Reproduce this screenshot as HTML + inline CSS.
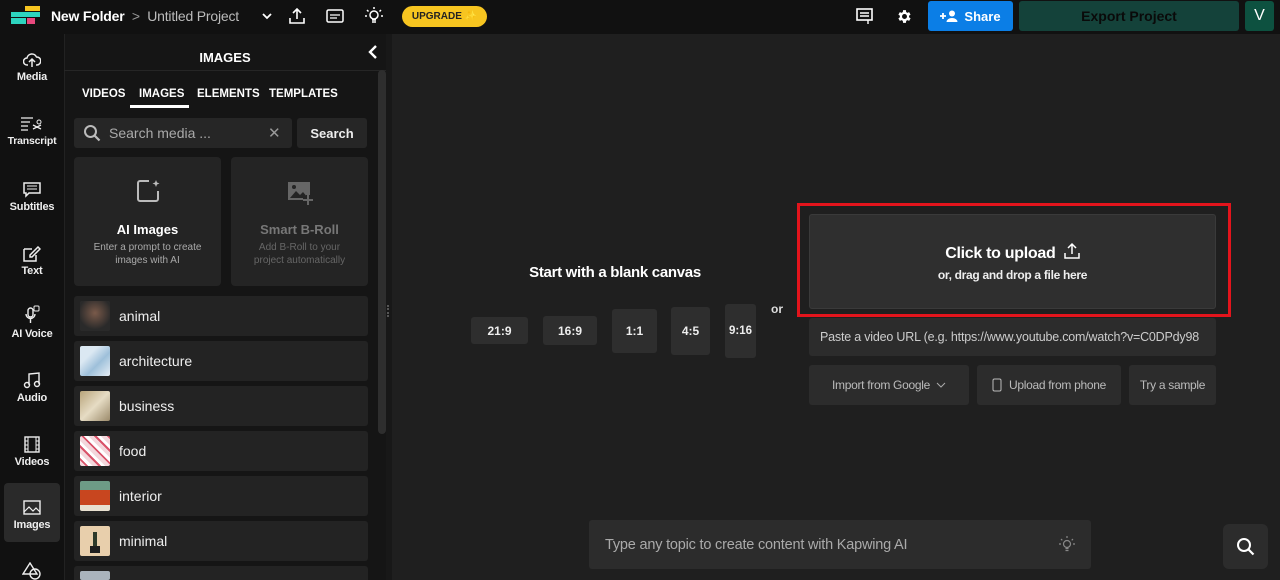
<!DOCTYPE html>
<html style="height:580px;overflow:hidden"><head><meta charset="utf-8"><style>
*{box-sizing:border-box;margin:0;padding:0}
html,body{width:1280px;height:580px;overflow:hidden}
body{background:#1f1f1f;font-family:"Liberation Sans",sans-serif;color:#fff;position:relative}
.abs{position:absolute}
.top{left:0;top:0;width:1280px;height:34px;background:#111}
.rail{left:0;top:34px;width:64px;height:546px;background:#111}
.panel{left:64px;top:34px;width:328px;height:546px;background:#151515;border-left:1px solid #222}
.ri{position:absolute;left:0;width:64px;text-align:center;font-size:11px;font-weight:bold;color:#eee;letter-spacing:-0.2px}
.ri svg{display:block;margin:0 auto 3px}
.card{position:absolute;left:74px;width:294px;height:40px;background:#232323;border-radius:3px}
.card .th{position:absolute;left:6px;top:5px;width:30px;height:30px;border-radius:2px}
.card span{position:absolute;left:45px;top:12px;font-size:14px;color:#eee}
.btn{position:absolute;background:#2e2e2e;border-radius:3px;color:#eee;font-size:12px;font-weight:bold;display:flex;align-items:center;justify-content:center}
.gb{position:absolute;background:#2c2c2c;border-radius:3px;color:#bbb;font-size:12px;display:flex;align-items:center;justify-content:center;letter-spacing:-0.3px}
</style></head><body>
<div class="abs top"></div>
<div class="abs" style="left:25px;top:6px;width:15px;height:5px;background:#f7c520"></div>
<div class="abs" style="left:11px;top:12px;width:29px;height:5px;background:#2dd4bf"></div>
<div class="abs" style="left:11px;top:18px;width:15px;height:6px;background:#2dd4bf"></div>
<div class="abs" style="left:27px;top:18px;width:8px;height:6px;background:#e8487d"></div>
<div class="abs" style="left:51px;top:8px;font-size:14px;font-weight:bold;letter-spacing:-0.2px">New Folder <span style="color:#999;font-weight:normal">&nbsp;&gt;&nbsp;</span> <span style="color:#bbb;font-weight:normal">Untitled Project</span></div>
<svg class="abs" style="left:261px;top:11px" width="12" height="10"><path d="M2 3l4 4 4-4" stroke="#fff" stroke-width="1.8" fill="none"/></svg>
<svg class="abs" style="left:288px;top:7px" width="18" height="18"><path d="M9 12V2M5 6l4-4 4 4M2 11v5h14v-5" stroke="#fff" stroke-width="1.6" fill="none"/></svg>
<svg class="abs" style="left:326px;top:9px" width="18" height="15"><rect x="1" y="1" width="16" height="12" rx="1.5" stroke="#fff" stroke-width="1.5" fill="none"/><path d="M4 6h10M4 9h7" stroke="#fff" stroke-width="1.3"/></svg>
<svg class="abs" style="left:364px;top:6px" width="20" height="20"><circle cx="10" cy="9" r="4" stroke="#fff" stroke-width="1.5" fill="none"/><path d="M8 14h4M8 16h4M10 1v2M3 4l1.5 1.5M17 4l-1.5 1.5M1 10h2M17 10h2" stroke="#fff" stroke-width="1.5"/></svg>
<div class="abs" style="left:402px;top:6px;width:85px;height:21px;background:#f7c520;border-radius:11px;color:#222;font-size:10px;font-weight:bold;text-align:center;line-height:21px">UPGRADE ✨</div>
<svg class="abs" style="left:856px;top:8px" width="17" height="17"><rect x="1" y="1" width="15" height="11" stroke="#fff" stroke-width="1.6" fill="none"/><path d="M4 5h9M4 8h9M12 12v4" stroke="#fff" stroke-width="1.4"/></svg>
<svg class="abs" style="left:896px;top:8px" width="17" height="17" viewBox="0 0 24 24"><path fill="#fff" d="M19.4 13a7.5 7.5 0 000-2l2.1-1.6-2-3.5-2.5 1a7 7 0 00-1.7-1L15 3h-4l-.4 2.9a7 7 0 00-1.7 1l-2.5-1-2 3.5L6.5 11a7.5 7.5 0 000 2l-2.1 1.6 2 3.5 2.5-1a7 7 0 001.7 1L11 21h4l.4-2.9a7 7 0 001.7-1l2.5 1 2-3.5zM13 15.5a3.5 3.5 0 110-7 3.5 3.5 0 010 7z" transform="translate(-1 0)"/></svg>
<div class="abs" style="left:928px;top:1px;width:85px;height:30px;background:#0b7ee6;border-radius:3px;font-size:13px;font-weight:bold;display:flex;align-items:center;justify-content:center"><svg width="18" height="12" style="margin-right:6px"><path d="M3 3v6M0 6h6" stroke="#fff" stroke-width="1.8"/><circle cx="12" cy="3.5" r="3" fill="#fff"/><path d="M6.5 12a5.5 4 0 0111 0z" fill="#fff"/></svg>Share</div>
<div class="abs" style="left:1019px;top:1px;width:220px;height:30px;background:#14423a;border-radius:3px;font-size:14px;font-weight:bold;line-height:30px;text-align:center;color:#0a0a0a">Export Project</div>
<div class="abs" style="left:1245px;top:1px;width:29px;height:30px;background:#0d5140;border-radius:3px;font-size:16px;line-height:30px;text-align:center">V</div>

<div class="abs rail"></div>
<div class="ri" style="top:52px"><svg width="18" height="16"><path d="M5 13H4a3.5 3.5 0 010-7 5 5 0 019.5-1A3.5 3.5 0 0114 13h-1M9 15V8M6 10l3-3 3 3" stroke="#eee" stroke-width="1.5" fill="none"/></svg>Media</div>
<div class="ri" style="top:116px;font-size:10.5px"><svg width="26" height="16"><path d="M2 2h12M2 6h9M2 10h7M2 14h7M14 9l8 4M14 13l8-4" stroke="#eee" stroke-width="1.3" fill="none"/><circle cx="20" cy="6" r="2" stroke="#eee" fill="none"/></svg>Transcript</div>
<div class="ri" style="top:182px"><svg width="18" height="16"><path d="M1 1h16v10H6l-3 3v-3H1z" stroke="#eee" stroke-width="1.5" fill="none"/><path d="M4 4h10M4 7h10" stroke="#eee"/></svg>Subtitles</div>
<div class="ri" style="top:246px"><svg width="18" height="16"><path d="M1 3h8M1 3v12h12V9M15 1l2 2-8 8H7V9z" stroke="#eee" stroke-width="1.5" fill="none"/></svg>Text</div>
<div class="ri" style="top:305px"><svg width="18" height="20"><rect x="5" y="3" width="5" height="9" rx="2.5" stroke="#eee" stroke-width="1.4" fill="none"/><path d="M3 9a4.5 4.5 0 009 0M7.5 14v4" stroke="#eee" stroke-width="1.4" fill="none"/><rect x="11" y="1" width="5" height="5" rx="1" stroke="#eee" fill="none"/></svg>AI Voice</div>
<div class="ri" style="top:372px"><svg width="18" height="17"><path d="M6 13V2l10-1v11" stroke="#eee" stroke-width="1.4" fill="none"/><circle cx="4" cy="13" r="2.5" stroke="#eee" stroke-width="1.4" fill="none"/><circle cx="14" cy="12" r="2.5" stroke="#eee" stroke-width="1.4" fill="none"/></svg>Audio</div>
<div class="ri" style="top:436px"><svg width="18" height="17"><rect x="2" y="1" width="14" height="15" stroke="#eee" stroke-width="1.4" fill="none"/><path d="M5 1v15M13 1v15M2 5h3M2 9h3M2 13h3M13 5h3M13 9h3M13 13h3" stroke="#eee"/></svg>Videos</div>
<div class="abs" style="left:4px;top:483px;width:56px;height:59px;background:#2a2a2a;border-radius:4px"></div>
<div class="ri" style="top:500px"><svg width="18" height="16"><rect x="1" y="1" width="16" height="13" stroke="#eee" stroke-width="1.4" fill="none"/><path d="M1 12l5-5 4 4 3-3 4 4" stroke="#eee" stroke-width="1.2" fill="none"/></svg>Images</div>
<div class="ri" style="top:562px"><svg width="20" height="18"><path d="M8 1L1 12h14z" stroke="#eee" stroke-width="1.4" fill="none"/><circle cx="13" cy="12" r="5" stroke="#eee" stroke-width="1.4" fill="none"/></svg></div>

<div class="abs panel"></div>
<div class="abs" style="left:64px;top:50px;width:322px;text-align:center;font-size:13px;font-weight:bold">IMAGES</div>
<svg class="abs" style="left:367px;top:44px" width="12" height="16"><path d="M9 2L3 8l6 6" stroke="#fff" stroke-width="2.4" fill="none"/></svg>
<div class="abs" style="left:64px;top:70px;width:322px;height:1px;background:#262626"></div>
<div class="abs" style="left:82px;top:88px;font-size:11.5px;font-weight:bold">VIDEOS</div>
<div class="abs" style="left:139px;top:88px;font-size:11.5px;font-weight:bold">IMAGES</div>
<div class="abs" style="left:130px;top:105px;width:59px;height:3px;background:#fff"></div>
<div class="abs" style="left:197px;top:88px;font-size:11.5px;font-weight:bold">ELEMENTS</div>
<div class="abs" style="left:269px;top:88px;font-size:11.5px;font-weight:bold">TEMPLATES</div>
<div class="abs" style="left:74px;top:118px;width:218px;height:30px;background:#262626;border-radius:3px"></div>
<svg class="abs" style="left:83px;top:124px" width="18" height="18"><circle cx="7.5" cy="7.5" r="5.5" stroke="#bbb" stroke-width="2" fill="none"/><path d="M11.5 11.5l5 5" stroke="#bbb" stroke-width="2.2"/></svg>
<div class="abs" style="left:109px;top:125px;font-size:14px;color:#aaa">Search media ...</div>
<div class="abs" style="left:268px;top:124px;font-size:15px;color:#999">✕</div>
<div class="btn" style="left:297px;top:118px;width:70px;height:30px;font-size:13px;background:#262626">Search</div>
<div class="abs" style="left:74px;top:157px;width:147px;height:129px;background:#242424;border-radius:4px"></div>
<svg class="abs" style="left:135px;top:178px" width="28" height="26"><path d="M14 3H5a2 2 0 00-2 2v16a2 2 0 002 2h16a2 2 0 002-2v-8" stroke="#bbb" stroke-width="2" fill="none"/><path d="M21 2l1 2.5 2.5 1-2.5 1-1 2.5-1-2.5-2.5-1 2.5-1z" fill="#bbb"/></svg>
<div class="abs" style="left:74px;top:222px;width:147px;text-align:center;font-size:13px;font-weight:bold">AI Images</div>
<div class="abs" style="left:74px;top:241px;width:147px;text-align:center;font-size:10px;color:#aaa;line-height:13px">Enter a prompt to create<br>images with AI</div>
<div class="abs" style="left:231px;top:157px;width:137px;height:129px;background:#242424;border-radius:4px"></div>
<svg class="abs" style="left:286px;top:180px" width="28" height="26"><rect x="2" y="2" width="22" height="18" fill="#666"/><path d="M4 18l6-7 4 4 3-3 5 6z" fill="#242424"/><circle cx="8" cy="7" r="2" fill="#242424"/><path d="M22 15v10M17 20h10" stroke="#242424" stroke-width="4"/><path d="M22 15v10M17 20h10" stroke="#666" stroke-width="2"/></svg>
<div class="abs" style="left:231px;top:222px;width:137px;text-align:center;font-size:13px;font-weight:bold;color:#777">Smart B-Roll</div>
<div class="abs" style="left:231px;top:241px;width:137px;text-align:center;font-size:10px;color:#666;line-height:13px">Add B-Roll to your<br>project automatically</div>

<div class="card" style="top:296px"><div class="th" style="background:radial-gradient(circle at 50% 40%,#7a5a4a,#2a2a2a 70%)"></div><span>animal</span></div>
<div class="card" style="top:341px"><div class="th" style="background:linear-gradient(135deg,#dbe8f2 30%,#9ec0da 60%,#e6eef5)"></div><span>architecture</span></div>
<div class="card" style="top:386px"><div class="th" style="background:linear-gradient(135deg,#b8a47a,#e6dcc4 50%,#9b8a6a)"></div><span>business</span></div>
<div class="card" style="top:431px"><div class="th" style="background:repeating-linear-gradient(45deg,#f3d7dc 0 4px,#d9536a 4px 6px,#fff 6px 9px)"></div><span>food</span></div>
<div class="card" style="top:476px"><div class="th" style="background:linear-gradient(180deg,#6d9b86 30%,#c8461f 30% 80%,#e8e0d0 80%)"></div><span>interior</span></div>
<div class="card" style="top:521px"><div class="th" style="background:#e8cfac"><div style="position:absolute;left:13px;top:6px;width:4px;height:16px;background:#2d3a2a"></div><div style="position:absolute;left:10px;top:20px;width:10px;height:7px;background:#1e1e1e"></div></div><span>minimal</span></div>
<div class="card" style="top:566px;height:14px;border-radius:3px 3px 0 0"><div class="th" style="background:#aab4bd;height:9px"></div></div>
<div class="abs" style="left:378px;top:70px;width:8px;height:364px;background:#2e2e2e;border-radius:4px"></div>
<div class="abs" style="left:386px;top:34px;width:6px;height:546px;background:#181818"></div>
<div class="abs" style="left:387px;top:305px;width:3px;height:12px;border-left:2px dotted #555"></div>

<div class="abs" style="left:460px;top:264px;width:310px;text-align:center;font-size:15px;font-weight:bold;letter-spacing:-0.3px">Start with a blank canvas</div>
<div class="btn" style="left:471px;top:317px;width:57px;height:27px">21:9</div>
<div class="btn" style="left:543px;top:316px;width:54px;height:29px">16:9</div>
<div class="btn" style="left:612px;top:309px;width:45px;height:44px">1:1</div>
<div class="btn" style="left:671px;top:307px;width:39px;height:48px">4:5</div>
<div class="btn" style="left:725px;top:304px;width:31px;height:54px;font-size:11.5px">9:16</div>
<div class="abs" style="left:771px;top:302px;font-size:12px;font-weight:bold;color:#ddd">or</div>
<div class="abs" style="left:797px;top:203px;width:434px;height:114px;border:3px solid #e3141c"></div>
<div class="abs" style="left:809px;top:214px;width:407px;height:95px;background:#2f2f2f;border-radius:3px;border:1px solid #3a3a3a"></div>
<div class="abs" style="left:809px;top:242px;width:407px;text-align:center;font-size:16px;font-weight:bold;letter-spacing:-0.3px">Click to upload &nbsp;<svg width="16" height="17" style="vertical-align:-1px"><path d="M8 12V2M4 6l4-4 4 4M1 11v5h14v-5" stroke="#fff" stroke-width="1.5" fill="none"/></svg></div>
<div class="abs" style="left:809px;top:268px;width:407px;text-align:center;font-size:12px;font-weight:bold;color:#eee;letter-spacing:-0.3px">or, drag and drop a file here</div>
<div class="abs" style="left:809px;top:318px;width:407px;height:38px;background:#2c2c2c;border-radius:3px;overflow:hidden;white-space:nowrap;font-size:12.5px;color:#ccc;line-height:38px;padding-left:11px;letter-spacing:-0.2px">Paste a video URL (e.g. https://www.youtube.com/watch?v=C0DPdy98</div>
<div class="gb" style="left:809px;top:365px;width:160px;height:40px">Import from Google &nbsp;<svg width="10" height="8"><path d="M1 2l4 4 4-4" stroke="#aaa" fill="none"/></svg></div>
<div class="gb" style="left:977px;top:365px;width:144px;height:40px"><svg width="10" height="14" style="margin-right:7px"><rect x="1" y="1" width="8" height="12" rx="1.5" stroke="#bbb" fill="none"/></svg>Upload from phone</div>
<div class="gb" style="left:1129px;top:365px;width:87px;height:40px">Try a sample</div>

<div class="abs" style="left:589px;top:520px;width:502px;height:49px;background:#2c2c2c;border-radius:3px"></div>
<div class="abs" style="left:605px;top:537px;font-size:14.5px;color:#aaa;letter-spacing:-0.2px">Type any topic to create content with Kapwing AI</div>
<svg class="abs" style="left:1058px;top:535px" width="18" height="19"><circle cx="9" cy="9" r="3.5" stroke="#888" stroke-width="1.2" fill="none"/><path d="M7.5 13.5h3M7.5 15.5h3M9 1v2M3 4l1.3 1.3M15 4l-1.3 1.3M1 9h2M15 9h2" stroke="#888" stroke-width="1.2"/></svg>
<div class="abs" style="left:1223px;top:524px;width:45px;height:45px;background:#2c2c2c;border-radius:6px"></div>
<svg class="abs" style="left:1236px;top:537px" width="20" height="20"><circle cx="8" cy="8" r="6" stroke="#fff" stroke-width="2" fill="none"/><path d="M12.5 12.5l5 5" stroke="#fff" stroke-width="2.2"/></svg>
</body></html>
